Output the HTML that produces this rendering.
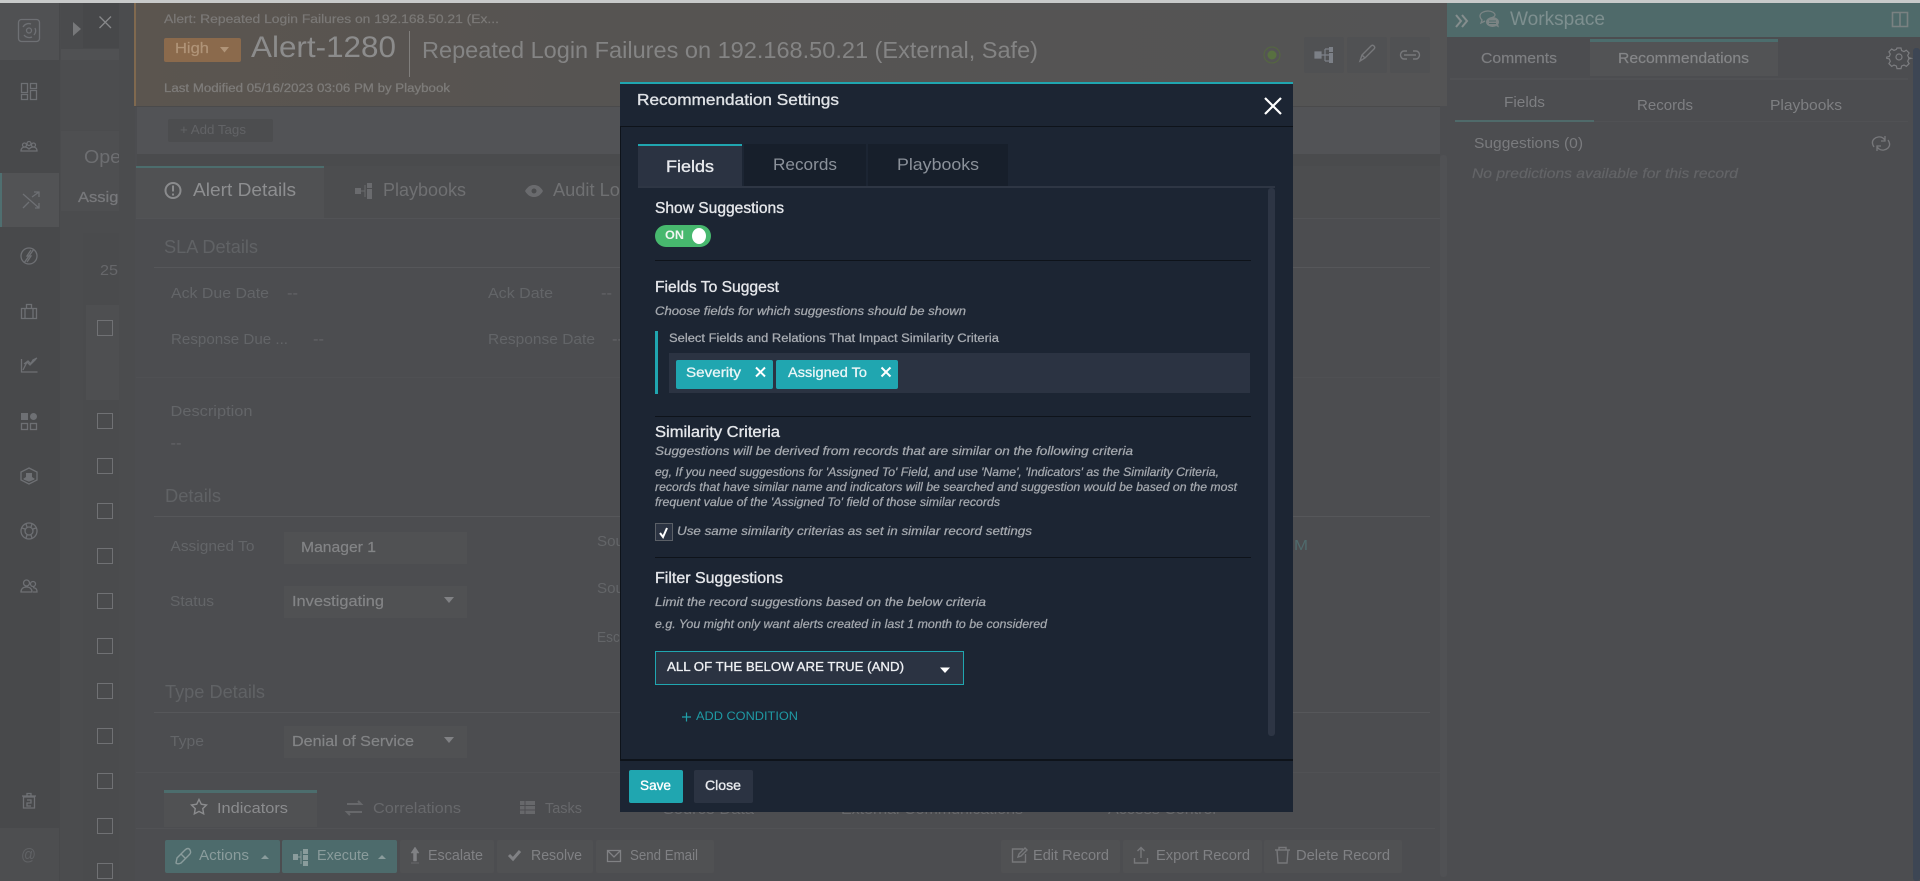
<!DOCTYPE html>
<html lang="en"><head><meta charset="utf-8"><title>Recommendation Settings</title>
<style>
html,body{margin:0;padding:0;background:#4c4d50;width:1920px;height:881px;overflow:hidden}
svg{display:block}
text{font-family:"Liberation Sans",sans-serif}
.d{fill:#636568;font-size:15px}
.h{fill:#606265;font-size:18px}
.v{fill:#838486;font-size:15px;stroke:#838486;stroke-width:.2px}
.m{fill:#e4e6ea;font-size:15.5px;stroke:#e4e6ea;stroke-width:.35px}
.i{fill:#a4a8ae;font-size:11.5px;font-style:italic;stroke:#a4a8ae;stroke-width:.25px}
.b{fill:#808184;font-size:15px}
.ic{fill:none;stroke:#6e7074;stroke-width:1.3}
.ib{fill:none;stroke:#77787b;stroke-width:1.4}
</style></head><body>
<svg xmlns="http://www.w3.org/2000/svg" width="1920" height="881" viewBox="0 0 1920 881">
<defs>
<clipPath id="c2"><rect x="61" y="0" width="58" height="881"/></clipPath>
<linearGradient id="hg" x1="0" x2="1" y1="0" y2="0"><stop offset="0" stop-color="#5b554f"/><stop offset=".35" stop-color="#565452"/><stop offset="1" stop-color="#545455"/></linearGradient>
</defs>
<rect width="1920" height="881" fill="#4c4d50"/>
<rect width="1920" height="3" fill="#c8caca"/>

<!-- sidebar -->
<rect x="0" y="3" width="60" height="878" fill="#48494b"/>
<rect x="0" y="3" width="59" height="57" fill="#505153"/>
<rect x="0" y="173" width="59" height="54" fill="#525355"/>
<rect x="0" y="173" width="2" height="54" fill="#4f6f70"/>
<rect x="0" y="828" width="59" height="53" fill="#4d4e50"/>
<g class="ic">
<rect x="18.5" y="19.5" width="21" height="22" rx="3"/><path d="M23 27a6.500 6.500 0 0 1 8-3M35 28a6.500 6.500 0 0 1-1 7M32 37a6.500 6.500 0 0 1-8-2"/><circle cx="29" cy="30.5" r="2.5"/>
<path d="M21.500 83.500h6v9h-6zM30.500 83.500h6v5h-6zM21.500 94.500h6v5h-6zM30.500 90.500h6v9h-6z"/>
<circle cx="24.500" cy="145" r="2"/><circle cx="29" cy="143.500" r="2"/><circle cx="33.500" cy="145" r="2"/><path d="M21 151c0-3 2-4 4-4s3 1 4 2c1-1 2-2 4-2s4 1 4 4z"/>
<path d="M23 194l16 14M35 208h4v-5M23 208l6-6M32 197l7-5M34 192h5v5"/>
<circle cx="29" cy="256" r="8"/><path d="M31 250l-4 6h4l-4 6M34 249l-10 14"/>
<path d="M21.500 308.500h15v10h-15zM26.500 308.500v-4h5v4M25 308.500v10M33 308.500v10"/>
<path d="M21.500 359v13h16M23 370l4-8 3 3 3-5 4-2M24 364l4-3 3 3 5-5"/>
<path d="M29 468l8 4v8l-8 4-8-4v-8zM24 479l5 2 5-2"/>
<circle cx="29" cy="531" r="8"/><circle cx="29" cy="531" r="4"/><path d="M26 524l1 3M32 524l-1 3M22 528l3 1M36 528l-3 1M26 538l1-3M32 538l-1-3"/>
<circle cx="26.500" cy="583" r="3"/><circle cx="33" cy="584" r="2.500"/><path d="M21 592c0-3 2-5 5.500-5s5.500 2 5.500 5zM33 592h4c0-3-1-4-4-4.500"/>
<path d="M23.500 797h11v11h-11zM22 796h14M27 796v-2.500h4v2.500M27 800h4v3h-4v3h4"/>
</g>
<path d="M26 473h6v4l3 2-6 2-6-2 3-2z" fill="#6e7074"/>
<rect x="21" y="413" width="7" height="7" fill="#6e7074"/><circle cx="33.500" cy="416.500" r="3.500" fill="#6e7074"/>
<rect x="21.500" y="423.500" width="6" height="6" class="ic"/><rect x="30.500" y="423.500" width="6" height="6" class="ic"/>
<text x="21" y="860" font-size="17" fill="#606265" textLength="15" lengthAdjust="spacingAndGlyphs">@</text>

<!-- second column -->
<rect x="60" y="3" width="75" height="878" fill="#4b4c4e"/>
<rect x="61" y="3" width="58" height="46" fill="#4a4b4d"/>
<rect x="61" y="49" width="58" height="11" fill="#505153"/>
<rect x="61" y="60" width="58" height="70" fill="#4c4d4f"/>
<rect x="61" y="131" width="58" height="80" fill="#4e4f51"/>
<rect x="83" y="3" width="36" height="45" fill="#47484a"/>
<path d="M73 22l8 7-8 7z" fill="#77787a"/>
<path d="M99.500 16.500l11.500 11.500M111 16.500l-11.500 11.500" stroke="#87888a" stroke-width="1.300" fill="none"/>
<rect x="83" y="233" width="36" height="648" fill="#4a4b4d"/>
<rect x="86" y="305" width="33" height="95" fill="#4e4f51"/>
<g clip-path="url(#c2)">
<text x="84" y="163" font-size="18" fill="#6d6e71" textLength="48" lengthAdjust="spacingAndGlyphs">Open</text>
<text x="78" y="202" font-size="15" fill="#77787b" stroke="#77787b" stroke-width=".3" textLength="68" lengthAdjust="spacingAndGlyphs">Assigned</text>
<text x="100" y="275" font-size="15" fill="#66676a" textLength="18" lengthAdjust="spacingAndGlyphs">25</text>
</g>
<g fill="none" stroke="#707174" stroke-width="1">
<rect x="97.500" y="320.500" width="15" height="15"/><rect x="97.500" y="413.500" width="15" height="15"/><rect x="97.500" y="458.500" width="15" height="15"/><rect x="97.500" y="503.500" width="15" height="15"/><rect x="97.500" y="548.500" width="15" height="15"/><rect x="97.500" y="593.500" width="15" height="15"/><rect x="97.500" y="638.500" width="15" height="15"/><rect x="97.500" y="683.500" width="15" height="15"/><rect x="97.500" y="728.500" width="15" height="15"/><rect x="97.500" y="773.500" width="15" height="15"/><rect x="97.500" y="818.500" width="15" height="15"/><rect x="97.500" y="863.500" width="15" height="15"/>
</g>

<!-- header -->
<rect x="134" y="3" width="1313" height="103" fill="url(#hg)"/>
<rect x="134" y="3" width="2" height="103" fill="#80694f"/>
<rect x="134" y="106" width="1306" height="1" fill="#4a4a4b"/>
<text x="164" y="23" font-size="11.500" fill="#7b7977" stroke="#7b7977" stroke-width=".2" textLength="335" lengthAdjust="spacingAndGlyphs">Alert: Repeated Login Failures on 192.168.50.21 (Ex...</text>
<rect x="164" y="38" width="77" height="24" rx="2" fill="#8b6a4c"/>
<text x="175" y="53" font-size="15" fill="#b09478" stroke="#b09478" stroke-width=".2" textLength="34" lengthAdjust="spacingAndGlyphs">High</text>
<path d="M220 47h9l-4.500 5.500z" fill="#b09478"/>
<text x="251" y="57" font-size="30" fill="#8c8c8c" textLength="145" lengthAdjust="spacingAndGlyphs">Alert-1280</text>
<rect x="409" y="31" width="1" height="46" fill="#807e7c"/>
<text x="422" y="58" font-size="23" fill="#848484" textLength="616" lengthAdjust="spacingAndGlyphs">Repeated Login Failures on 192.168.50.21 (External, Safe)</text>
<text x="164" y="92" font-size="11.500" fill="#7e7c7a" stroke="#7e7c7a" stroke-width=".25" textLength="286" lengthAdjust="spacingAndGlyphs">Last Modified 05/16/2023 03:06 PM by Playbook</text>
<circle cx="1272" cy="55" r="8" fill="none" stroke="#55683f" stroke-width="1"/><circle cx="1272" cy="55" r="4.500" fill="#587040"/>
<rect x="1304" y="37" width="40" height="36" rx="2" fill="#505153"/><rect x="1347" y="37" width="40" height="36" rx="2" fill="#505153"/><rect x="1390" y="37" width="40" height="36" rx="2" fill="#505153"/>
<path d="M1315 52h6v6h-6zM1321 55h4M1325 49v12M1325 49h4M1325 55h4M1325 61h4" stroke="#7c8087" stroke-width="1.200" fill="none"/><rect x="1315" y="52" width="6" height="6" fill="#7c8087"/><rect x="1329" y="47" width="4" height="5" fill="#7c8087"/><rect x="1329" y="53" width="4" height="5" fill="#7c8087"/><rect x="1329" y="58" width="4" height="5" fill="#7c8087"/>
<path d="M1360 61l2-6 9-9c1-1 2-1 3 0s1 2 0 3l-9 9zM1362 55l3 3" class="ib"/>
<path d="M1407 51h-3c-2 0-3.500 2-3.500 4s1.500 4 3.500 4h3M1413 51h3c2 0 3.500 2 3.500 4s-1.500 4-3.500 4h-3M1404 55h12" class="ib"/>

<!-- tags row -->
<rect x="137" y="107" width="1303" height="47" fill="#525356"/>
<rect x="168" y="119" width="105" height="23" rx="2" fill="#4c4d4f"/>
<text x="180" y="134" font-size="13" fill="#626366" textLength="66" lengthAdjust="spacingAndGlyphs">+ Add Tags</text>
<rect x="137" y="154" width="1303" height="12" fill="#4a4b4d"/>

<!-- main tabs -->
<rect x="136" y="166" width="188" height="52" fill="#505153"/>
<rect x="136" y="166" width="188" height="2" fill="#4c6d6d"/>
<rect x="324" y="166" width="1116" height="52" fill="#4c4d4f"/>
<rect x="136" y="218" width="1304" height="1" fill="#525356"/>
<circle cx="173" cy="190.500" r="7.500" fill="none" stroke="#8a8b8d" stroke-width="2"/><rect x="172" y="185.500" width="2" height="6" fill="#8a8b8d"/><rect x="172" y="193.500" width="2" height="2" fill="#8a8b8d"/>
<text x="193" y="196" font-size="18" fill="#8d8e90" textLength="103" lengthAdjust="spacingAndGlyphs">Alert Details</text>
<rect x="355" y="188" width="6" height="6" fill="#6a6b6e"/><rect x="367" y="183" width="5" height="5" fill="#6a6b6e"/><rect x="367" y="189" width="5" height="5" fill="#6a6b6e"/><rect x="367" y="194" width="5" height="5" fill="#6a6b6e"/><path d="M361 191h4M365 185v12" stroke="#6a6b6e"/>
<text x="383" y="196" font-size="18" fill="#6f7072" textLength="83" lengthAdjust="spacingAndGlyphs">Playbooks</text>
<path d="M525 191c3-5 6-6 9-6s6 1 9 6c-3 5-6 6-9 6s-6-1-9-6z" fill="#6a6b6e"/><circle cx="534" cy="191" r="2.500" fill="#4c4d4f"/>
<text x="553" y="196" font-size="18" fill="#6f7072" textLength="77" lengthAdjust="spacingAndGlyphs">Audit Log</text>

<!-- body texts -->
<text x="164" y="253" class="h" textLength="94" lengthAdjust="spacingAndGlyphs">SLA Details</text>
<rect x="154" y="267" width="1276" height="1" fill="#56575a"/>
<text x="171" y="298" class="d" textLength="98" lengthAdjust="spacingAndGlyphs">Ack Due Date</text><text x="287" y="298" class="d" textLength="11" lengthAdjust="spacingAndGlyphs">--</text>
<text x="488" y="298" class="d" textLength="65" lengthAdjust="spacingAndGlyphs">Ack Date</text><text x="601" y="298" class="d" textLength="11" lengthAdjust="spacingAndGlyphs">--</text>
<text x="171" y="344" class="d" textLength="117" lengthAdjust="spacingAndGlyphs">Response Due ...</text><text x="313" y="344" class="d" textLength="11" lengthAdjust="spacingAndGlyphs">--</text>
<text x="488" y="344" class="d" textLength="107" lengthAdjust="spacingAndGlyphs">Response Date</text><text x="612" y="344" class="d" textLength="11" lengthAdjust="spacingAndGlyphs">--</text>
<rect x="136" y="377" width="1304" height="1" fill="#4f5053"/>
<text x="170.500" y="416" class="d" textLength="82" lengthAdjust="spacingAndGlyphs">Description</text>
<text x="170.500" y="448" class="d" textLength="11" lengthAdjust="spacingAndGlyphs">--</text>
<text x="165" y="502" class="h" textLength="56" lengthAdjust="spacingAndGlyphs">Details</text>
<rect x="154" y="516" width="1276" height="1" fill="#56575a"/>
<text x="170.500" y="551" class="d" textLength="84" lengthAdjust="spacingAndGlyphs">Assigned To</text>
<rect x="284" y="532" width="183" height="32" fill="#505153"/>
<text x="301" y="552" class="v" textLength="75" lengthAdjust="spacingAndGlyphs">Manager 1</text>
<text x="597" y="546" class="d" textLength="48" lengthAdjust="spacingAndGlyphs">Source</text>
<text x="597" y="593" class="d" textLength="48" lengthAdjust="spacingAndGlyphs">Source</text>
<text x="597" y="642" class="d" textLength="60" lengthAdjust="spacingAndGlyphs">Escalated</text>
<text x="170" y="606" class="d" textLength="44" lengthAdjust="spacingAndGlyphs">Status</text>
<rect x="284" y="586" width="183" height="32" fill="#505153"/>
<text x="292" y="606" class="v" textLength="92" lengthAdjust="spacingAndGlyphs">Investigating</text>
<path d="M444 597h10l-5 6z" fill="#808184"/>
<text x="165" y="698" class="h" textLength="100" lengthAdjust="spacingAndGlyphs">Type Details</text>
<rect x="154" y="712" width="1276" height="1" fill="#56575a"/>
<text x="170" y="746" class="d" textLength="34" lengthAdjust="spacingAndGlyphs">Type</text>
<rect x="284" y="726" width="183" height="32" fill="#505153"/>
<text x="292" y="746" class="v" textLength="122" lengthAdjust="spacingAndGlyphs">Denial of Service</text>
<path d="M444 737h10l-5 6z" fill="#808184"/>
<text x="1294" y="550" font-size="15" fill="#4f6a6c" textLength="14" lengthAdjust="spacingAndGlyphs">M</text>

<rect x="136" y="772" width="1304" height="1" fill="#505154"/>
<rect x="164" y="790" width="153" height="37" fill="#505153"/>
<rect x="164" y="790" width="153" height="3" fill="#4c6d6d"/>
<path d="M199 799.500l2.300 4.700 5.200.8-3.750 3.650.9 5.200-4.650-2.450-4.650 2.450.9-5.200-3.750-3.650 5.200-.8z" fill="none" stroke="#8b8c8e" stroke-width="1.400"/>
<text x="217" y="813" font-size="15" fill="#8b8c8e" textLength="71" lengthAdjust="spacingAndGlyphs">Indicators</text>
<path d="M347 804h14l-3-3M362 812h-15l3 3" fill="none" stroke="#67686b" stroke-width="2"/>
<text x="373" y="813" font-size="15" fill="#67686b" textLength="88" lengthAdjust="spacingAndGlyphs">Correlations</text>
<rect x="520" y="801" width="15" height="13" fill="#67686b"/><path d="M520 805.500h15M520 810h15M525 801v13" stroke="#4c4d50"/>
<text x="545" y="813" font-size="15" fill="#67686b" textLength="37" lengthAdjust="spacingAndGlyphs">Tasks</text>
<text x="663" y="814" font-size="15" fill="#67686b" textLength="91" lengthAdjust="spacingAndGlyphs">Source Data</text>
<text x="841" y="814" font-size="15" fill="#67686b" textLength="182" lengthAdjust="spacingAndGlyphs">External Communications</text>
<text x="1108" y="814" font-size="15" fill="#67686b" textLength="108" lengthAdjust="spacingAndGlyphs">Access Control</text>
<rect x="136" y="828" width="1299" height="1" fill="#515255"/>

<!-- action bar -->
<rect x="165" y="840" width="115" height="33" rx="2" fill="#4d6b6c"/>
<rect x="282" y="840" width="115" height="33" rx="2" fill="#4d6b6c"/>
<rect x="400" y="840" width="94" height="33" rx="2" fill="#505153"/>
<rect x="497" y="840" width="96" height="33" rx="2" fill="#505153"/>
<rect x="596" y="840" width="118" height="33" rx="2" fill="#505153"/>
<rect x="1001" y="840" width="119" height="33" rx="2" fill="#505153"/>
<rect x="1123" y="840" width="139" height="33" rx="2" fill="#505153"/>
<rect x="1264" y="840" width="138" height="33" rx="2" fill="#505153"/>
<path d="M176 863l1-5 8-8c2-2 4-2 5 0s1 3-1 5l-8 8c-2 1-4 1-5 0zM181 854l5 5" fill="none" stroke="#8a9c9c" stroke-width="1.400"/>
<text x="199" y="860" class="b" style="fill:#8a9c9c" textLength="50" lengthAdjust="spacingAndGlyphs">Actions</text>
<path d="M261 859l4-4 4 4z" fill="#8a9c9c"/>
<rect x="293" y="854" width="5" height="6" fill="#8a9c9c"/><rect x="303" y="849" width="5" height="5" fill="#8a9c9c"/><rect x="303" y="855" width="5" height="5" fill="#8a9c9c"/><rect x="303" y="861" width="5" height="5" fill="#8a9c9c"/><path d="M298 857h3M301 851v13" stroke="#8a9c9c"/>
<text x="317" y="860" class="b" style="fill:#8a9c9c" textLength="52" lengthAdjust="spacingAndGlyphs">Execute</text>
<path d="M378 859l4-4 4 4z" fill="#8a9c9c"/>
<path d="M415 847l4 6h-2.500v8h-3v-8h-2.500zM411 863h8" fill="#808184" stroke="#808184" stroke-width=".5"/>
<text x="428" y="860" class="b" textLength="55" lengthAdjust="spacingAndGlyphs">Escalate</text>
<path d="M509 855l4 4 7-8" fill="none" stroke="#808184" stroke-width="3"/>
<text x="531" y="860" class="b" textLength="51" lengthAdjust="spacingAndGlyphs">Resolve</text>
<path d="M607.500 850.500h13v11h-13zM608 851l6 6 6-6" fill="none" stroke="#808184" stroke-width="1.300"/>
<text x="630" y="860" class="b" textLength="68" lengthAdjust="spacingAndGlyphs">Send Email</text>
<path d="M1023 849h-10.500v13h13v-8M1018 857l1-3 6-6 2 2-6 6z" fill="none" stroke="#77787b" stroke-width="1.400"/>
<text x="1033" y="860" class="b" textLength="76" lengthAdjust="spacingAndGlyphs">Edit Record</text>
<path d="M1141 858v-10M1137.500 851l3.500-3.500 3.500 3.500M1134.500 858v5h13v-5" fill="none" stroke="#77787b" stroke-width="1.400"/>
<text x="1156" y="860" class="b" textLength="94" lengthAdjust="spacingAndGlyphs">Export Record</text>
<path d="M1275 850h15M1279 850v-2.500h7v2.500M1277 850l1 13h9l1-13" fill="none" stroke="#77787b" stroke-width="1.400"/>
<text x="1296" y="860" class="b" textLength="94" lengthAdjust="spacingAndGlyphs">Delete Record</text>
<rect x="1440" y="155" width="7" height="722" rx="3" fill="#505154"/>

<!-- right panel -->
<rect x="1447" y="37" width="473" height="844" fill="#4c4d50"/>
<rect x="1447" y="3" width="473" height="34" fill="#4f6a6a"/>
<path d="M1456 15l5 6-5 6M1462 15l5 6-5 6" fill="none" stroke="#858e8e" stroke-width="2"/>
<path d="M1491 18c3-1 4-2 4-3 0-2-3-4-7-4s-8 2-8 5c0 2 1 3 2 4l-1 3 4-2" fill="none" stroke="#7c8585" stroke-width="1.300"/>
<ellipse cx="1492.500" cy="22" rx="6.500" ry="5" fill="#7c8585"/><path d="M1496 26l3 1.500-1-3.500z" fill="#7c8585"/><path d="M1489 21h7M1489 23.500h7" stroke="#4f6a6a"/>
<text x="1510" y="25" font-size="19" fill="#7e8f8f" textLength="95" lengthAdjust="spacingAndGlyphs">Workspace</text>
<path d="M1892.500 12.500h15v14h-15zM1900 12.500v14" fill="none" stroke="#7a8282" stroke-width="1.600"/>
<text x="1481" y="63" font-size="15" fill="#7e7f82" stroke="#7e7f82" stroke-width=".2" textLength="76" lengthAdjust="spacingAndGlyphs">Comments</text>
<rect x="1590" y="39" width="188" height="37" fill="#525355"/>
<rect x="1590" y="39" width="188" height="3" fill="#4c6d6d"/>
<text x="1618" y="63" font-size="15" fill="#858688" stroke="#858688" stroke-width=".2" textLength="131" lengthAdjust="spacingAndGlyphs">Recommendations</text>
<rect x="1450" y="78" width="458" height="2" fill="#505154"/>
<g fill="none" stroke="#7c7d80" stroke-width="1.200">
<circle cx="1899" cy="57" r="3"/>
<path d="M1897 48h4l.6 2.600 2.400 1 2.300-1.400 2.800 2.800-1.400 2.300 1 2.400 2.300.6v0l-2.300.6-1 2.400 1.400 2.300-2.800 2.800-2.300-1.400-2.400 1-.6 2.600h-4l-.6-2.600-2.400-1-2.300 1.400-2.800-2.800 1.400-2.300-1-2.400-2.600-.6v-1.200l2.600-.6 1-2.400-1.400-2.300 2.800-2.800 2.300 1.400 2.400-1z"/>
</g>
<text x="1504" y="107" font-size="14.500" fill="#7e7f82" textLength="41" lengthAdjust="spacingAndGlyphs">Fields</text>
<text x="1637" y="110" font-size="14.500" fill="#7e7f82" textLength="56" lengthAdjust="spacingAndGlyphs">Records</text>
<text x="1770" y="110" font-size="14.500" fill="#7e7f82" textLength="72" lengthAdjust="spacingAndGlyphs">Playbooks</text>
<rect x="1455" y="120" width="139" height="2" fill="#4f6a6a"/>
<rect x="1594" y="121" width="314" height="1" fill="#505154"/>
<text x="1474" y="148" font-size="15" fill="#7a7b7e" textLength="109" lengthAdjust="spacingAndGlyphs">Suggestions (0)</text>
<path d="M1874 147c-2-3-2-6 0-8 2-2 6-3 9-1l2 2M1888 140c2 3 2 6 0 8-2 2-6 3-9 1l-2-2M1885 136v5h-4M1877 151v-5h4" fill="none" stroke="#77787b" stroke-width="1.300"/>
<text x="1472" y="178" font-size="14" font-style="italic" fill="#636467" stroke="#636467" stroke-width=".2" textLength="266" lengthAdjust="spacingAndGlyphs">No predictions available for this record</text>
<rect x="1913" y="48" width="7" height="833" rx="3" fill="#3d4654"/>

<!-- modal -->
<rect x="620" y="82" width="673" height="730" fill="#1c2533"/>
<rect x="620" y="82" width="673" height="2" fill="#20a6b0"/>
<rect x="620" y="126" width="673" height="1" fill="#0e131a"/>
<rect x="620" y="126" width="1" height="633" fill="#0e131a"/>
<rect x="620" y="759" width="673" height="2" fill="#0e131a"/>
<text x="637" y="105" font-size="16" fill="#dfe2e6" stroke="#dfe2e6" stroke-width=".35" textLength="202" lengthAdjust="spacingAndGlyphs">Recommendation Settings</text>
<path d="M1265 98l16 16M1281 98l-16 16" stroke="#fff" stroke-width="2.200" fill="none"/>

<rect x="638" y="144" width="104" height="44" fill="#2b3342"/>
<rect x="638" y="144" width="104" height="2" fill="#20a6b0"/>
<rect x="744" y="144" width="122" height="42" fill="#171f2b"/>
<rect x="868" y="144" width="140" height="42" fill="#171f2b"/>
<rect x="638" y="186" width="637" height="2" fill="#2e3644"/>
<rect x="1268" y="188" width="7" height="548" rx="3" fill="#2d3544"/>
<text x="666" y="172" font-size="17" fill="#e8eaee" stroke="#e8eaee" stroke-width=".35" textLength="48" lengthAdjust="spacingAndGlyphs">Fields</text>
<text x="773" y="170" font-size="17" fill="#8b919a" textLength="64" lengthAdjust="spacingAndGlyphs">Records</text>
<text x="897" y="170" font-size="17" fill="#8b919a" textLength="82" lengthAdjust="spacingAndGlyphs">Playbooks</text>

<text x="655" y="213" class="m" textLength="129" lengthAdjust="spacingAndGlyphs">Show Suggestions</text>
<rect x="655" y="225" width="56" height="22" rx="11" fill="#47b86e"/>
<text x="665" y="239" font-size="12" font-weight="bold" fill="#f2f6f2" textLength="19" lengthAdjust="spacingAndGlyphs">ON</text>
<ellipse cx="699" cy="236" rx="7" ry="8" fill="#fff"/>
<rect x="655" y="260" width="596" height="1" fill="#0e131a"/>

<text x="655" y="292" class="m" textLength="124" lengthAdjust="spacingAndGlyphs">Fields To Suggest</text>
<text x="655" y="315" class="i" textLength="311" lengthAdjust="spacingAndGlyphs">Choose fields for which suggestions should be shown</text>
<rect x="655" y="331" width="3" height="63" fill="#20a6b0"/>
<text x="669" y="342" font-size="11.500" fill="#a9adb3" stroke="#a9adb3" stroke-width=".25" textLength="330" lengthAdjust="spacingAndGlyphs">Select Fields and Relations That Impact Similarity Criteria</text>
<rect x="669" y="353" width="581" height="40" fill="#2b3342"/>
<rect x="676" y="360" width="97" height="29" rx="2" fill="#20a6b0"/>
<text x="686" y="377" font-size="14" fill="#eaf6f7" stroke="#eaf6f7" stroke-width=".3" textLength="55" lengthAdjust="spacingAndGlyphs">Severity</text>
<path d="M756 367.500l9 9M765 367.500l-9 9" stroke="#fff" stroke-width="2" fill="none"/>
<rect x="776" y="360" width="122" height="29" rx="2" fill="#20a6b0"/>
<text x="788" y="377" font-size="14" fill="#eaf6f7" stroke="#eaf6f7" stroke-width=".3" textLength="79" lengthAdjust="spacingAndGlyphs">Assigned To</text>
<path d="M881.500 367.500l9 9M890.500 367.500l-9 9" stroke="#fff" stroke-width="2" fill="none"/>
<rect x="655" y="416" width="596" height="1" fill="#0e131a"/>

<text x="655" y="437" class="m" textLength="125" lengthAdjust="spacingAndGlyphs">Similarity Criteria</text>
<text x="655" y="455" class="i" textLength="478" lengthAdjust="spacingAndGlyphs">Suggestions will be derived from records that are similar on the following criteria</text>
<text x="655" y="476" class="i" textLength="564" lengthAdjust="spacingAndGlyphs">eg, If you need suggestions for 'Assigned To' Field, and use 'Name', 'Indicators' as the Similarity Criteria,</text>
<text x="655" y="491" class="i" textLength="582" lengthAdjust="spacingAndGlyphs">records that have similar name and indicators will be searched and suggestion would be based on the most</text>
<text x="655" y="506" class="i" textLength="345" lengthAdjust="spacingAndGlyphs">frequent value of the 'Assigned To' field of those similar records</text>
<rect x="655.500" y="523.500" width="17" height="17" fill="#2b3342" stroke="#5b6067"/>
<path d="M660 533l3 4 4-9" fill="none" stroke="#fff" stroke-width="2"/>
<text x="677" y="535" class="i" textLength="355" lengthAdjust="spacingAndGlyphs">Use same similarity criterias as set in similar record settings</text>
<rect x="655" y="557" width="596" height="1" fill="#0e131a"/>

<text x="655" y="583" class="m" textLength="128" lengthAdjust="spacingAndGlyphs">Filter Suggestions</text>
<text x="655" y="606" class="i" textLength="331" lengthAdjust="spacingAndGlyphs">Limit the record suggestions based on the below criteria</text>
<text x="655" y="628" class="i" textLength="392" lengthAdjust="spacingAndGlyphs">e.g. You might only want alerts created in last 1 month to be considered</text>
<rect x="655.500" y="651.500" width="308" height="33" fill="#2b3342" stroke="#20a6b0"/>
<text x="667" y="671" font-size="12.500" fill="#eef0f3" stroke="#eef0f3" stroke-width=".3" textLength="237" lengthAdjust="spacingAndGlyphs">ALL OF THE BELOW ARE TRUE (AND)</text>
<path d="M940 667.500h10l-5 5.500z" fill="#fff"/>
<path d="M682 717h9M686.500 712.500v9" stroke="#20a0aa" stroke-width="1.200"/>
<text x="696" y="720" font-size="11.500" fill="#1f9aa4" textLength="102" lengthAdjust="spacingAndGlyphs">ADD CONDITION</text>

<rect x="629" y="770" width="54" height="33" rx="2" fill="#20a6b0"/>
<text x="640" y="790" font-size="14" fill="#fff" stroke="#fff" stroke-width=".35" textLength="31" lengthAdjust="spacingAndGlyphs">Save</text>
<rect x="694" y="770" width="59" height="33" rx="2" fill="#2b3342"/>
<text x="705" y="790" font-size="14" fill="#e8eaee" stroke="#e8eaee" stroke-width=".35" textLength="36" lengthAdjust="spacingAndGlyphs">Close</text>
</svg>
</body></html>
